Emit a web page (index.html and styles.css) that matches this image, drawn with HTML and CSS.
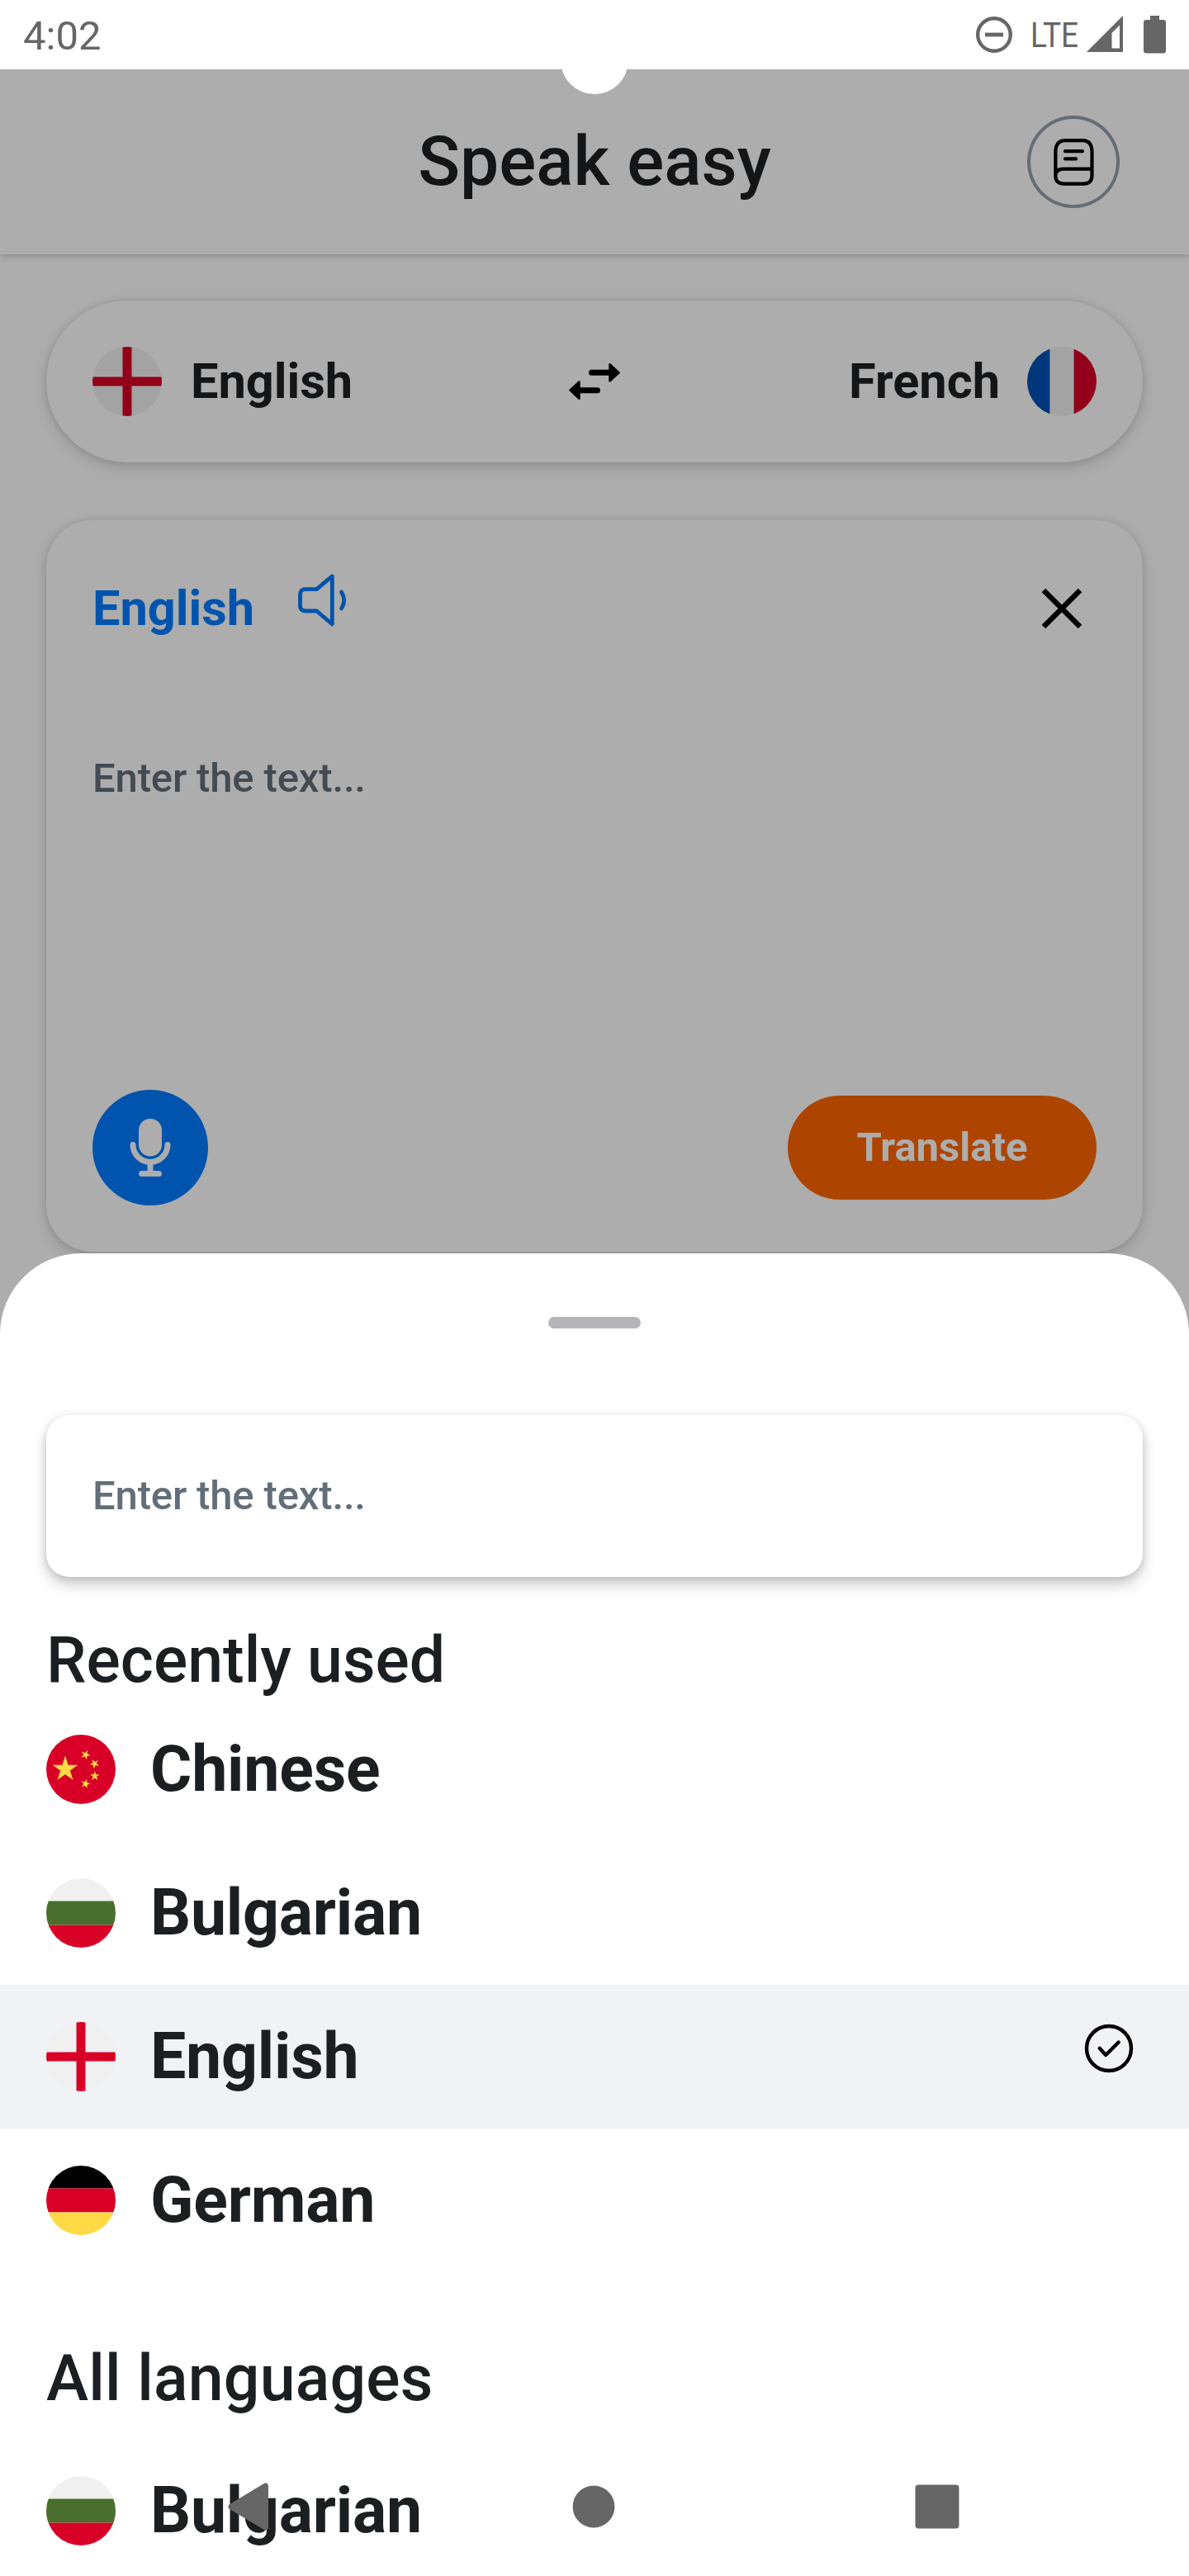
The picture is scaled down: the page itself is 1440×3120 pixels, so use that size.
FILE: index.html
```html
<!DOCTYPE html>
<html lang="en">
<head>
<meta charset="utf-8">
<title>Speak easy</title>
<link rel="stylesheet" href="styles.css">
</head>
<body>
<svg class="defs" width="0" height="0" aria-hidden="true">
  <defs>
    <clipPath id="round"><circle cx="256" cy="256" r="256"/></clipPath>
    <symbol id="flag-en" viewBox="0 0 512 512"><g clip-path="url(#round)"><path fill="#f0f0f0" d="M0 0h512v512H0z"/><path fill="#d80027" d="M222.6 0h66.8v512h-66.8zM0 222.6h512v66.8H0z"/></g></symbol>
    <symbol id="flag-fr" viewBox="0 0 512 512"><g clip-path="url(#round)"><path fill="#f0f0f0" d="M0 0h512v512H0z"/><path fill="#0052b4" d="M0 0h167v512H0z"/><path fill="#d80027" d="M345 0h167v512H345z"/></g></symbol>
    <symbol id="flag-bg" viewBox="0 0 512 512"><g clip-path="url(#round)"><path fill="#f0f0f0" d="M0 0h512v167H0z"/><path fill="#496e2d" d="M0 167h512v178H0z"/><path fill="#d80027" d="M0 345h512v167H0z"/></g></symbol>
    <symbol id="flag-de" viewBox="0 0 512 512"><g clip-path="url(#round)"><path d="M0 0h512v167H0z"/><path fill="#d80027" d="M0 167h512v178H0z"/><path fill="#ffda44" d="M0 345h512v167H0z"/></g></symbol>
    <symbol id="flag-cn" viewBox="0 0 512 512"><circle cx="256" cy="256" r="256" fill="#d80027"/><g fill="#ffda44"><path d="M140.1 155.8l22.1 68h71.5l-57.8 42.1 22.1 68-57.9-42-57.9 42 22.2-68-57.9-42.1H118z"/><path d="M303.5 396.7l-16.9-20.8-25 9.7 14.5-22.5-16.9-20.9 25.9 6.9 14.6-22.5 1.4 26.8 26 6.9-25.1 9.6z"/><path d="M337.1 335.5l8-25.6-21.9-15.5 26.8-.4 7.9-25.6 8.7 25.4 26.8-.3-21.5 16 8.6 25.4-21.9-15.5z"/><path d="M382.4 187.9L370.6 212l19.2 18.7-26.5-3.8-11.8 24-4.6-26.4-26.6-3.8 23.8-12.5-4.6-26.5 19.2 18.7z"/><path d="M304.2 114.9l-2 26.8 24.9 10.1-26.1 6.4-1.9 26.8-14.1-22.8-26.1 6.4 17.3-20.5-14.2-22.7 24.9 10.1z"/></g></symbol>
  </defs>
</svg>
<div class="phone">
  <div class="status">
    <span class="clock">4:02</span>
    <div class="status-icons">
      <svg class="dnd" width="44" height="44" viewBox="0 0 44 44"><circle cx="22" cy="22" r="19.8" fill="none" stroke="#666" stroke-width="4.4"/><path fill="#666" d="M11 19.6h22v4.8H11z"/></svg>
      <span class="lte">LTE</span>
      <svg class="signal" width="44" height="44" viewBox="0 0 44 44"><path fill="#666" fill-rule="evenodd" d="M44 0v44H0zM40 11.5L30.5 21v18.5H40z"/></svg>
      <svg class="battery" width="27" height="46" viewBox="0 0 27 46"><path fill="#666" d="M8 0h11v5h5q3 0 3 3v34.500q0 3-3 3H3q-3 0-3-3V8q0-3 3-3h5z"/></svg>
    </div>
  </div>
  <div class="app">
    <header class="header">
      <h1 class="title">Speak easy</h1>
      <div class="history">
        <svg width="112" height="112" viewBox="0 0 112 112" fill="none" stroke="#000" stroke-width="4.200" stroke-linecap="round"><path d="M34.400 72.500V44Q34.400 30.200 46 30.200H67Q78.500 30.200 78.500 44V72.500Q78.500 82.600 68 82.600H45Q34.400 82.600 34.400 73.600Q34.400 64.700 43.500 64.700H78"/><path d="M46 43.200h21M46 52.400h13"/></svg>
      </div>
    </header>
    <div class="languages">
      <svg class="flag"><use href="#flag-en"/></svg>
      <span class="lang">English</span>
      <svg class="swap" width="64" height="46" viewBox="0 0 64 46"><path stroke="#000" stroke-width="7" stroke-linecap="round" d="M28.500 12.300H50M35.500 33.700H12"/><path stroke="#000" stroke-width="2.500" stroke-linejoin="round" d="M50.500 2.200L61.500 12.300L50.500 22.500zM13.500 23.500L2.500 33.700L13.500 43.800z"/></svg>
      <span class="lang to">French</span>
      <svg class="flag"><use href="#flag-fr"/></svg>
    </div>
    <main class="card">
      <div class="card-head">
        <span class="lang source">English</span>
        <svg class="speaker" width="64" height="70" viewBox="0 0 64 70" fill="none" stroke="#007dff" stroke-width="4.800" stroke-linecap="round" stroke-linejoin="round"><path d="M24.500 20.700H11Q4.500 20.700 4.500 27V40.500Q4.500 47 11 47H24.500L43.300 63V4.800z"/><path d="M54.500 24Q61 34 54.500 44"/></svg>
        <svg class="close" width="84" height="84" viewBox="0 0 84 84"><path stroke="#000" stroke-width="6.500" d="M20 20L64 64M64 20L20 64"/></svg>
      </div>
      <div class="placeholder">Enter the text...</div>
      <div class="actions">
        <div class="mic"><svg width="140" height="140" viewBox="0 0 140 140"><rect x="56" y="35" width="28" height="45.500" rx="14" fill="#fff"/><path fill="none" stroke="#fff" stroke-width="7" stroke-linecap="round" d="M49 66.500a21 21 0 0 0 42 0"/><path fill="#fff" d="M66.500 88h7v11h-7z"/><rect x="56" y="98" width="28" height="7" rx="3.500" fill="#fff"/></svg></div>
        <div class="translate">Translate</div>
      </div>
    </main>
  </div>
  <div class="scrim"></div>
  <div class="notch"></div>
  <section class="sheet">
    <div class="handle"></div>
    <div class="search">Enter the text...</div>
    <h2 class="group">Recently used</h2>
    <div class="row"><svg class="flag"><use href="#flag-cn"/></svg><span>Chinese</span></div>
    <div class="row"><svg class="flag"><use href="#flag-bg"/></svg><span>Bulgarian</span></div>
    <div class="row selected"><svg class="flag"><use href="#flag-en"/></svg><span>English</span>
      <svg class="check" width="60" height="60" viewBox="0 0 60 60" fill="none" stroke="#000" stroke-width="4.400" stroke-linecap="round" stroke-linejoin="round"><circle cx="30" cy="30" r="27"/><path d="M18.700 29.800L26.200 38L41.700 22.500"/></svg>
    </div>
    <div class="row"><svg class="flag"><use href="#flag-de"/></svg><span>German</span></div>
    <h2 class="group all">All languages</h2>
    <div class="row"><svg class="flag"><use href="#flag-bg"/></svg><span>Bulgarian</span></div>
  </section>
  <nav class="navbar">
    <svg width="60" height="60" viewBox="0 0 60 60"><path fill="#666" stroke="#666" stroke-width="7" stroke-linejoin="round" d="M49.500 5L49.500 55L8 30z"/></svg>
    <svg width="60" height="60" viewBox="0 0 60 60"><circle cx="30" cy="30" r="25.400" fill="#666"/></svg>
    <svg width="60" height="60" viewBox="0 0 60 60"><rect x="3.500" y="3.500" width="53" height="53" rx="4" fill="#666"/></svg>
  </nav>
</div>
</body>
</html>
```
FILE: styles.css
```css
* { box-sizing: border-box; }
body { margin: 0; font-family: Roboto, "Liberation Sans", sans-serif; color: #1c1f22; background: #fff; }
svg { display: block; flex: none; }
h1, h2 { margin: 0; font-weight: 500; }
.defs { position: absolute; }
.phone { position: relative; width: 1440px; height: 3120px; overflow: hidden; background: #fff; }

.status { height: 84px; padding: 0 28px; display: flex; justify-content: space-between; color: #666; }
.clock { font-size: 49px; line-height: 58px; padding-top: 15px; }
.status-icons { display: flex; align-items: flex-start; padding-top: 19px; }
.dnd { margin: 1px 22px 0 0; }
.lte { width: 68px; font-size: 43px; line-height: 50px; margin-top: -2px; transform: scaleX(.86); transform-origin: 0 0; }
.battery { margin-left: 25px; }

.header { height: 224px; display: grid; grid-template-columns: 1fr auto 1fr; align-items: center; padding: 0 84px; box-shadow: 0 3px 8px rgba(0, 0, 0, .18); }
.title { grid-column: 2; font-size: 84px; line-height: 98px; }
.history { justify-self: end; width: 112px; height: 112px; border-radius: 50%; box-shadow: inset 0 0 0 4px #96a0ab; }

.languages, .card { margin: 0 56px; background: #fff; box-shadow: 0 6px 18px rgba(0, 0, 0, .15), 0 0 10px rgba(0, 0, 0, .1); }
.languages { height: 196px; margin-top: 56px; padding: 0 56px; border-radius: 98px; display: grid; grid-template-columns: 84px 1fr 64px 1fr 84px; column-gap: 35px; align-items: center; }
.flag { width: 84px; height: 84px; }
.lang { font-size: 59.5px; line-height: 70px; font-weight: 700; }
.to { text-align: right; margin-right: -2px; }

.card { margin-top: 70px; height: 886px; padding: 56px; border-radius: 56px; display: flex; flex-direction: column; }
.card-head { height: 102px; display: flex; align-items: center; }
.source { color: #007dff; }
.speaker { margin: -18px 0 0 51px; }
.close { margin-left: auto; }
.placeholder, .search { font-size: 49px; line-height: 58px; font-weight: 500; letter-spacing: -.15px; color: #626e79; }
.placeholder { margin-top: 126px; }
.actions { margin-top: auto; display: flex; align-items: center; justify-content: space-between; }
.mic { width: 140px; height: 140px; border-radius: 50%; background: #007dff; }
.translate { width: 374px; height: 126px; border-radius: 63px; background: #f60; color: #fff; font-size: 49px; line-height: 126px; font-weight: 700; text-align: center; }

.scrim { position: absolute; inset: 84px 0 0; background: rgba(0, 0, 0, .32); }
.notch { position: absolute; left: 679px; top: 32px; width: 82px; height: 82px; border-radius: 50%; background: #fff; }

.sheet { position: absolute; inset: 1518px 0 0; overflow: hidden; border-radius: 98px 98px 0 0; background: #fff; display: flex; flex-direction: column; }
.sheet > * { flex: none; }
.handle { width: 112px; height: 14px; margin: 77px auto 105px; border-radius: 7px; background: #b4b4b9; }
.search { height: 196px; margin: 0 56px 56px; padding: 69px 56px; border-radius: 28px; box-shadow: 0 9px 18px rgba(0, 0, 0, .2), 0 2px 10px rgba(0, 0, 0, .12); }
.group { padding: 0 56px; font-size: 77px; line-height: 90px; }
.all { margin: 84px 0 28px; letter-spacing: .2px; }
.row { height: 174px; padding: 0 56px; display: flex; align-items: center; gap: 42px; font-size: 77px; line-height: 90px; font-weight: 700; letter-spacing: -.2px; }
.selected { background: #f1f2f6; }
.check { margin: -20px 11px 0 auto; }

.navbar { position: absolute; left: 0; right: 0; bottom: 54px; padding: 0 275px 0 272px; display: flex; justify-content: space-between; }
```
